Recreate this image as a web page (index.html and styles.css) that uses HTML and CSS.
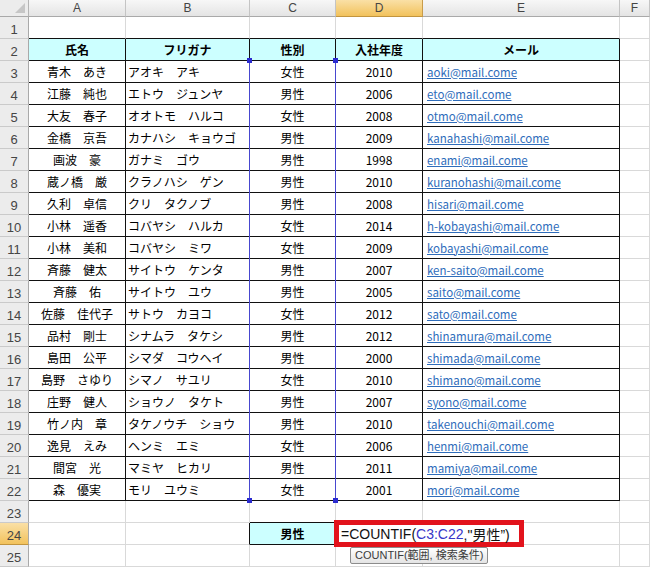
FILE: index.html
```html
<!DOCTYPE html>
<html lang="ja">
<head>
<meta charset="utf-8">
<title>COUNTIF</title>
<link rel="stylesheet" href="styles.css">
</head>
<body>
<div class="sheet">
  <div class="corner"><svg class="tri" width="12" height="12" viewBox="0 0 12 12"><polygon points="11,1 11,11 1,11" fill="#c6c6c6"/></svg></div>
  <div class="ch">A</div><div class="ch">B</div><div class="ch">C</div><div class="ch on">D</div><div class="ch">E</div><div class="ch">F</div>

  <div class="rh">1</div><div class="c b"></div><div class="c b"></div><div class="c b"></div><div class="c b"></div><div class="c b"></div><div class="c"></div>

  <div class="rh">2</div><div class="c t hd">氏名</div><div class="c t hd">フリガナ</div><div class="c t hd">性別</div><div class="c t hd">入社年度</div><div class="c t hd">メール</div><div class="c"></div>

  <div class="rh">3</div><div class="c t cc">青木　あき</div><div class="c t kn">アオキ　アキ</div><div class="c t cc">女性</div><div class="c t cc">2010</div><div class="c t ml">aoki@mail.come</div><div class="c"></div>
  <div class="rh">4</div><div class="c t cc">江藤　純也</div><div class="c t kn">エトウ　ジュンヤ</div><div class="c t cc">男性</div><div class="c t cc">2006</div><div class="c t ml">eto@mail.come</div><div class="c"></div>
  <div class="rh">5</div><div class="c t cc">大友　春子</div><div class="c t kn">オオトモ　ハルコ</div><div class="c t cc">女性</div><div class="c t cc">2008</div><div class="c t ml">otmo@mail.come</div><div class="c"></div>
  <div class="rh">6</div><div class="c t cc">金橋　京吾</div><div class="c t kn">カナハシ　キョウゴ</div><div class="c t cc">男性</div><div class="c t cc">2009</div><div class="c t ml">kanahashi@mail.come</div><div class="c"></div>
  <div class="rh">7</div><div class="c t cc">画波　豪</div><div class="c t kn">ガナミ　ゴウ</div><div class="c t cc">男性</div><div class="c t cc">1998</div><div class="c t ml">enami@mail.come</div><div class="c"></div>
  <div class="rh">8</div><div class="c t cc">蔵ノ橋　厳</div><div class="c t kn">クラノハシ　ゲン</div><div class="c t cc">男性</div><div class="c t cc">2010</div><div class="c t ml">kuranohashi@mail.come</div><div class="c"></div>
  <div class="rh">9</div><div class="c t cc">久利　卓信</div><div class="c t kn">クリ　タクノブ</div><div class="c t cc">男性</div><div class="c t cc">2008</div><div class="c t ml">hisari@mail.come</div><div class="c"></div>
  <div class="rh">10</div><div class="c t cc">小林　遥香</div><div class="c t kn">コバヤシ　ハルカ</div><div class="c t cc">女性</div><div class="c t cc">2014</div><div class="c t ml">h-kobayashi@mail.come</div><div class="c"></div>
  <div class="rh">11</div><div class="c t cc">小林　美和</div><div class="c t kn">コバヤシ　ミワ</div><div class="c t cc">女性</div><div class="c t cc">2009</div><div class="c t ml">kobayashi@mail.come</div><div class="c"></div>
  <div class="rh">12</div><div class="c t cc">斉藤　健太</div><div class="c t kn">サイトウ　ケンタ</div><div class="c t cc">男性</div><div class="c t cc">2007</div><div class="c t ml">ken-saito@mail.come</div><div class="c"></div>
  <div class="rh">13</div><div class="c t cc">斉藤　佑</div><div class="c t kn">サイトウ　ユウ</div><div class="c t cc">男性</div><div class="c t cc">2005</div><div class="c t ml">saito@mail.come</div><div class="c"></div>
  <div class="rh">14</div><div class="c t cc">佐藤　佳代子</div><div class="c t kn">サトウ　カヨコ</div><div class="c t cc">女性</div><div class="c t cc">2012</div><div class="c t ml">sato@mail.come</div><div class="c"></div>
  <div class="rh">15</div><div class="c t cc">品村　剛士</div><div class="c t kn">シナムラ　タケシ</div><div class="c t cc">男性</div><div class="c t cc">2012</div><div class="c t ml">shinamura@mail.come</div><div class="c"></div>
  <div class="rh">16</div><div class="c t cc">島田　公平</div><div class="c t kn">シマダ　コウヘイ</div><div class="c t cc">男性</div><div class="c t cc">2000</div><div class="c t ml">shimada@mail.come</div><div class="c"></div>
  <div class="rh">17</div><div class="c t cc">島野　さゆり</div><div class="c t kn">シマノ　サユリ</div><div class="c t cc">女性</div><div class="c t cc">2010</div><div class="c t ml">shimano@mail.come</div><div class="c"></div>
  <div class="rh">18</div><div class="c t cc">庄野　健人</div><div class="c t kn">ショウノ　タケト</div><div class="c t cc">男性</div><div class="c t cc">2007</div><div class="c t ml">syono@mail.come</div><div class="c"></div>
  <div class="rh">19</div><div class="c t cc">竹ノ内　章</div><div class="c t kn">タケノウチ　ショウ</div><div class="c t cc">男性</div><div class="c t cc">2010</div><div class="c t ml">takenouchi@mail.come</div><div class="c"></div>
  <div class="rh">20</div><div class="c t cc">逸見　えみ</div><div class="c t kn">ヘンミ　エミ</div><div class="c t cc">女性</div><div class="c t cc">2006</div><div class="c t ml">henmi@mail.come</div><div class="c"></div>
  <div class="rh">21</div><div class="c t cc">間宮　光</div><div class="c t kn">マミヤ　ヒカリ</div><div class="c t cc">男性</div><div class="c t cc">2011</div><div class="c t ml">mamiya@mail.come</div><div class="c"></div>
  <div class="rh">22</div><div class="c t cc">森　優実</div><div class="c t kn">モリ　ユウミ</div><div class="c t cc">女性</div><div class="c t cc">2001</div><div class="c t ml">mori@mail.come</div><div class="c"></div>

  <div class="rh">23</div><div class="c"></div><div class="c"></div><div class="c b"></div><div class="c"></div><div class="c"></div><div class="c"></div>
  <div class="rh on">24</div><div class="c"></div><div class="c br"></div><div class="c t hd">男性</div><div class="c"></div><div class="c"></div><div class="c"></div>
  <div class="rh">25</div><div class="c"></div><div class="c"></div><div class="c"></div><div class="c"></div><div class="c"></div><div class="c"></div>

  <div class="selc"></div>
  <div class="sq sq1"></div><div class="sq sq2"></div><div class="sq sq3"></div><div class="sq sq4"></div>

  <div class="edit">=COUNTIF(<span class="ref">C3:C22</span>,"男性”)</div>
  <div class="tip">COUNTIF(範囲, 検索条件)</div>
</div>
</body>
</html>
```
FILE: styles.css
```css
body {
  margin: 0;
  background: #fff;
}

.sheet {
  position: relative;
  display: grid;
  grid-template-columns: 29px 97px 124px 86px 87px 197px 30px;
  grid-template-rows: 17px repeat(25, 22px);
  width: 650px;
  height: 567px;
  font-family: "Noto Sans CJK JP", sans-serif;
  font-size: 12px;
  color: #000;
}

.sheet > div {
  box-sizing: border-box;
}

.corner {
  background: #ececec;
  border-right: 1px solid #b4b4b4;
  border-bottom: 1px solid #a9a9a9;
  display: flex;
  align-items: flex-end;
  justify-content: flex-end;
}

.tri {
  display: block;
  margin: 0 2px 2px 0;
}

.ch {
  background: linear-gradient(#f7f7f7, #e4e4e4);
  border-right: 1px solid #c4c4c4;
  border-bottom: 1px solid #a9a9a9;
  display: flex;
  align-items: center;
  justify-content: center;
  font: 12px "Liberation Sans", sans-serif;
  color: #454545;
}

.ch.on {
  background: linear-gradient(#fae0a6, #f2c25c);
  border-right-color: #c99c4a;
  border-bottom-color: #c2953f;
}

.rh {
  background: #ececec;
  border-right: 1px solid #a9a9a9;
  border-bottom: 1px solid #cacaca;
  display: flex;
  align-items: flex-end;
  justify-content: center;
  font: 13px "Liberation Sans", sans-serif;
  color: #454545;
  line-height: 15px;
  padding-bottom: 1px;
}

.rh.on {
  background: linear-gradient(#fae0a6, #f2c25c);
  border-bottom-color: #c2953f;
}

.c {
  border-right: 1px solid #d9d9d9;
  border-bottom: 1px solid #d9d9d9;
  display: flex;
  align-items: center;
  white-space: nowrap;
  line-height: 16px;
}

.t {
  border-right-color: #111;
  border-bottom-color: #111;
}

.b {
  border-bottom-color: #111;
}

.br {
  border-right-color: #111;
}

.hd {
  background: #ccffff;
  font-weight: bold;
  justify-content: center;
}

.cc {
  justify-content: center;
}

.kn {
  padding-left: 2px;
}

.ml {
  padding-left: 4px;
  color: #2f6dbb;
  text-decoration: underline;
  font-size: 11.5px;
}

.selc {
  position: absolute;
  left: 249px;
  top: 60px;
  width: 87px;
  height: 441px;
  border-left: 1px solid #4848cf;
  border-right: 1px solid #4848cf;
}

.sq {
  position: absolute;
  width: 5px;
  height: 5px;
  background: #2b2bd0;
}

.sq1 { left: 247px; top: 58px; }
.sq2 { left: 333px; top: 58px; }
.sq3 { left: 247px; top: 498px; }
.sq4 { left: 333px; top: 498px; }

.edit {
  position: absolute;
  left: 334px;
  top: 520px;
  width: 190px;
  height: 27px;
  border: 5px solid #e2131c;
  background: #fff;
  display: flex;
  align-items: center;
  padding-left: 2px;
  white-space: nowrap;
  font: 14px "Liberation Sans", "Noto Sans CJK JP", sans-serif;
  color: #111;
}

.ref {
  color: #3636c8;
}

.tip {
  position: absolute;
  left: 350px;
  top: 547px;
  height: 17px;
  padding: 0 4px;
  border: 1px solid #8c8c8c;
  border-radius: 2px;
  background: linear-gradient(#ffffff, #e4e4e4);
  font: 11px "Liberation Sans", "Noto Sans CJK JP", sans-serif;
  line-height: 15px;
  color: #3c3c3c;
  white-space: nowrap;
}
```
